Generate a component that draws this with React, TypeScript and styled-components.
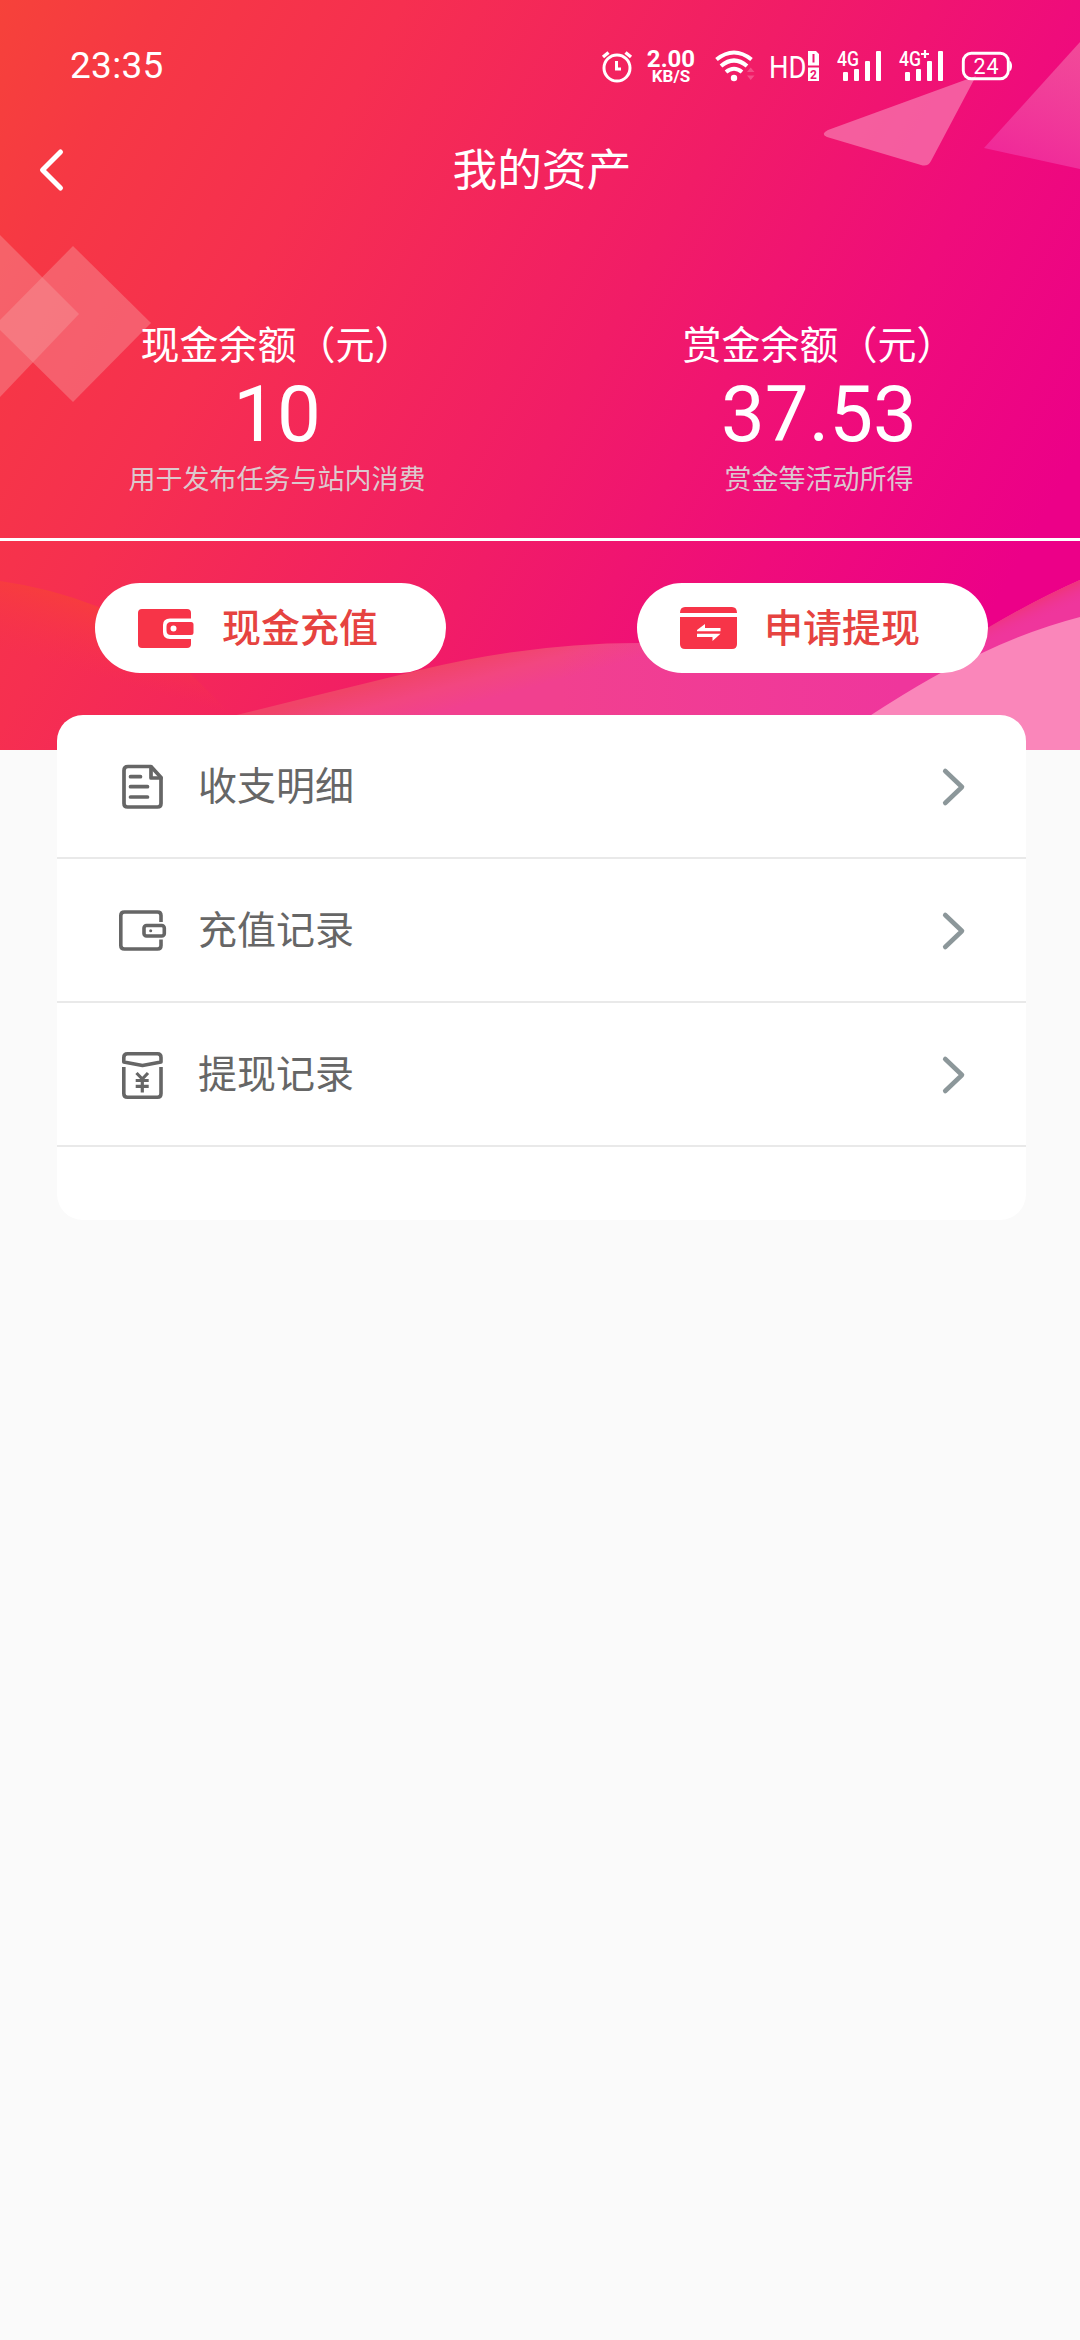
import React from "react";
import styled, { createGlobalStyle } from "styled-components";

const GlobalStyle = createGlobalStyle`
  body {
    margin: 0;
    background: #fafafa;
    font-family: Roboto, "Noto Sans CJK SC", sans-serif;
  }
`;

const Page = styled.div`
  width: 1080px;
  min-height: 2340px;
  background: #fafafa;
  overflow: hidden;
`;

const Hero = styled.header`
  position: relative;
  box-sizing: border-box;
  height: 750px;
  color: #fff;
  background: linear-gradient(
    119deg,
    #f6423a 0%,
    #f63844 11%,
    #f62f50 27%,
    #f11c67 53%,
    #ef0c7b 72%,
    #ec0088 89%
  );
`;

const Scenery = styled.svg`
  position: absolute;
  inset: 0;
`;

const HeroContent = styled.div`
  position: relative;
  display: flex;
  flex-direction: column;
`;

const StatusBar = styled.div`
  display: flex;
  align-items: center;
  justify-content: space-between;
  height: 132px;
  padding: 0 68px 0 70px;
`;

const Clock = styled.span`
  font-size: 37px;
  line-height: 44px;
  letter-spacing: 0.3px;
`;

const StatusIcons = styled.div`
  display: flex;
  align-items: center;
  svg {
    display: block;
  }
`;

const StatusItem = styled.span<{ $gap?: number }>`
  margin-left: ${(p) => p.$gap ?? 0}px;
`;

const NetSpeed = styled.div`
  display: flex;
  flex-direction: column;
  align-items: center;
  width: 54px;
  padding-top: 1px;
  font-weight: 700;
`;

const SpeedValue = styled.span`
  font-size: 24px;
  line-height: 20px;
`;

const SpeedUnit = styled.span`
  font-size: 17px;
  line-height: 15px;
`;

const NavBar = styled.nav`
  display: grid;
  grid-template-columns: 90px 1fr 90px;
  align-items: center;
  height: 76px;
`;

const BackButton = styled.button`
  display: flex;
  border: 0;
  padding: 0 0 0 36px;
  background: none;
  color: #fff;
`;

const Title = styled.h1`
  margin: 0;
  padding: 2px 0 0 4px;
  text-align: center;
  font-size: 44.7px;
  line-height: 66px;
  font-weight: 400;
`;

const Balances = styled.section`
  display: grid;
  grid-template-columns: 540px 540px;
  box-sizing: border-box;
  height: 333px;
  padding-top: 110px;
  border-bottom: 3px solid #fff;
`;

const Balance = styled.div`
  display: flex;
  flex-direction: column;
  align-items: center;
  padding-left: 14px;

  & + & {
    padding-left: 18px;
  }
`;

const BalanceLabel = styled.span`
  font-size: 39px;
  line-height: 56px;
`;

const Amount = styled.span`
  padding-top: 1px;
  font-size: 78px;
  line-height: 80px;
`;

const BalanceNote = styled.span`
  font-size: 27px;
  line-height: 50px;
  color: rgba(218, 218, 218, 0.92);
`;

const Actions = styled.div`
  display: flex;
  justify-content: space-between;
  padding: 42px 92px 0 95px;
`;

const PillButton = styled.button`
  display: flex;
  align-items: center;
  gap: 26px;
  box-sizing: border-box;
  width: 351px;
  height: 90px;
  padding: 0 0 0 41px;
  border: 0;
  border-radius: 45px;
  background: #fff;
  color: #e64340;
  font: 500 39px/56px Roboto, "Noto Sans CJK SC", sans-serif;
`;

const PillText = styled.span`
  padding-top: 1px;
`;

const Card = styled.main`
  position: relative;
  box-sizing: border-box;
  width: 969px;
  margin: -35px 0 0 57px;
  padding-bottom: 73px;
  border-radius: 26px;
  background: #fff;
`;

const Row = styled.div`
  display: flex;
  align-items: center;
  box-sizing: border-box;
  height: 144px;
  padding: 1px 59px 0 61px;
  border-bottom: 2px solid #e9e9e9;
`;

const RowLabel = styled.span`
  flex: 1;
  margin-left: 30px;
  padding-top: 1px;
  font-size: 39px;
  line-height: 56px;
  color: #666;
`;

const HeroScenery = () => (
  <Scenery width="1080" height="750" viewBox="0 0 1080 750">
    <defs>
      <linearGradient id="wave" gradientUnits="userSpaceOnUse" x1="430" y1="668" x2="442" y2="712">
        <stop offset="0" stopColor="#f04468" />
        <stop offset="0.5" stopColor="#f24680" />
        <stop offset="1" stopColor="#f1408f" />
      </linearGradient>
      <linearGradient id="waveRight" gradientUnits="userSpaceOnUse" x1="560" y1="0" x2="900" y2="0">
        <stop offset="0" stopColor="#f0369f" stopOpacity="0" />
        <stop offset="1" stopColor="#ef369c" />
      </linearGradient>
      <linearGradient id="crest" gradientUnits="userSpaceOnUse" x1="1028" y1="600" x2="1038" y2="622">
        <stop offset="0" stopColor="#ef3470" />
        <stop offset="1" stopColor="#ef349c" stopOpacity="0" />
      </linearGradient>
      <linearGradient id="ember" gradientUnits="userSpaceOnUse" x1="40" y1="584" x2="20" y2="655">
        <stop offset="0" stopColor="#f74138" stopOpacity="0.8" />
        <stop offset="1" stopColor="#f73548" stopOpacity="0" />
      </linearGradient>
      <linearGradient id="shard" gradientUnits="userSpaceOnUse" x1="1080" y1="50" x2="1030" y2="170">
        <stop offset="0" stopColor="#f36aa8" stopOpacity="0.65" />
        <stop offset="1" stopColor="#f02fa0" stopOpacity="0.8" />
      </linearGradient>
    </defs>
    <path d="M0 235L79 314L0 397Z" fill="#f6969a" fillOpacity="0.44" />
    <path d="M73 246L151 323L73 402L-5 325Z" fill="#f6969a" fillOpacity="0.44" />
    <path
      d="M828 130L976 76L931 161Q928 167 921 165L827 137Q820 134 828 130Z"
      fill="#f890bd"
      fillOpacity="0.6"
    />
    <path d="M1080 42L984 148L1080 169Z" fill="url(#shard)" />
    <path d="M0 581Q50 588 96 606Q150 628 230 714L230 750H0Z" fill="url(#ember)" />
    <path
      d="M228 717Q330 692 420 670Q530 643 640 643Q800 700 988 628Q1035 600 1080 580V750H228Z"
      fill="url(#wave)"
    />
    <path
      d="M560 650Q600 643 640 643Q800 700 988 628Q1035 600 1080 580V750H560Z"
      fill="url(#waveRight)"
    />
    <path d="M980 632Q1035 600 1080 580V750H980Z" fill="url(#crest)" />
    <path d="M868 717Q940 670 982 653Q1030 630 1080 617V750H868Z" fill="#fa86ba" />
  </Scenery>
);

const AlarmIcon = () => (
  <svg width="32" height="40" viewBox="600 46 32 40" fill="none" stroke="#fff" strokeWidth="3">
    <circle cx="616" cy="68" r="13" />
    <path d="M615.5 61V69H620" />
    <path d="M602 57L607.5 52.5M624.5 52.5L630 57" strokeWidth="3.400" />
  </svg>
);

const WifiIcon = () => (
  <svg width="40" height="40" viewBox="714 46 40 40" fill="none" stroke="#fff" strokeWidth="4.100">
    <path d="M715.500 59.500Q733 45.500 750.500 59.500" />
    <path d="M720 66Q733 55 746 66" />
    <path d="M725 72Q733 65.500 741 72" />
    <circle cx="733" cy="78" r="3.200" fill="#fff" stroke="none" />
    <path d="M746 72L749.700 67.500L753.500 72ZM746 75.500L749.700 80L753.500 75.500Z" fill="#fff" fillOpacity="0.22" stroke="none" />
  </svg>
);

const HdIcon = () => (
  <svg width="52" height="40" viewBox="768 46 52 40" fill="#fff" fontFamily="Roboto">
    <text x="768" y="77.900" fontSize="32" fontWeight="400" textLength="37.500" lengthAdjust="spacingAndGlyphs">HD</text>
    <path d="M807 51H815L818 54V65.500H807ZM807 67.500H818V81H807Z" />
    <path d="M812.500 54V62.500" stroke="#ee1672" strokeWidth="2" />
    <text x="809" y="78.500" fontSize="12" fontWeight="700" style={{ fill: "#ee1672" }}>2</text>
  </svg>
);

const SignalIcon = ({ plus }: { plus?: boolean }) => (
  <svg width="46" height="40" viewBox="835 46 46 40" fill="#fff" fontFamily="Roboto">
    <text x="836" y="66" fontSize="20" fontWeight="500" textLength="22" lengthAdjust="spacingAndGlyphs">4G</text>
    {plus && <path d="M862 50V58M858 54H866" stroke="#fff" strokeWidth="2.200" />}
    <rect x="842" y="72" width="5" height="9" rx="1" />
    <rect x="853" y="69" width="5" height="12" rx="1" />
    <rect x="864" y="61" width="5" height="20" rx="1" />
    <rect x="875" y="51" width="5" height="30" rx="1" />
  </svg>
);

const BatteryIcon = () => (
  <svg width="51" height="40" viewBox="960 46 51 40" fill="#fff" fontFamily="Roboto">
    <rect x="962.300" y="53.300" width="45" height="25.400" rx="8" fill="none" stroke="#fff" strokeWidth="2.900" />
    <path d="M1008.500 60.500Q1011 62 1011 66Q1011 70 1008.500 71.500Z" />
    <text x="972.500" y="73.500" fontSize="21.500" textLength="25">24</text>
  </svg>
);

const BackIcon = () => (
  <svg width="30" height="46" viewBox="36 148 30 46" fill="none" stroke="#fff" strokeWidth="5" strokeLinecap="round" strokeLinejoin="round">
    <path d="M60.500 153L42.500 171L60.500 189" />
  </svg>
);

const WalletSolidIcon = () => (
  <svg width="60" height="48" viewBox="136 604 60 48" fill="#f73448">
    <path d="M142 609H187Q191 609 191 613V618.500H170Q163 618.500 163 625V632Q163 639 170 639H191V644Q191 648 187 648H142Q138 648 138 644V613Q138 609 142 609Z" />
    <path
      fillRule="evenodd"
      d="M171 622H191Q193.500 622 193.500 624.500V632.500Q193.500 635 191 635H171Q166.500 635 166.500 630.500V626.500Q166.500 622 171 622ZM173.500 625.500A3 3 0 1 0 173.500 631.500A3 3 0 1 0 173.500 625.500Z"
    />
  </svg>
);

const TransferCardIcon = () => (
  <svg width="60" height="48" viewBox="677 605 60 48" fill="#f73448">
    <path d="M684 608H731Q736 608 736 614H679Q679 608 684 608Z" />
    <path d="M679 618H736V645Q736 650 731 650H684Q679 650 679 645Z" />
    <path d="M696 631L704 625V629H719.500V632.300H696ZM719.500 634.800L711.500 642V638H696V634.800Z" fill="#fff" />
  </svg>
);

const LedgerIcon = () => (
  <svg width="50" height="50" viewBox="118 762 50 50" fill="none" stroke="#666" strokeWidth="3.700" strokeLinejoin="round" strokeLinecap="round">
    <path d="M128 766.500H151L161 777.500V803.500Q161 807 157.500 807H127.500Q124 807 124 803.500V770.500Q124 766.500 128 766.500Z" />
    <path d="M151 767V778H161M130.500 776.700H140.500M130.500 786.700H147.500M130.500 797H147.500" />
  </svg>
);

const WalletIcon = () => (
  <svg width="50" height="50" viewBox="118 906 50 50" fill="none" stroke="#666" strokeWidth="3.600" strokeLinejoin="round" strokeLinecap="butt">
    <path d="M161 922V915.500Q161 912 157.500 912H124.500Q120.800 912 120.800 915.500V945.500Q120.800 949 124.500 949H157.500Q161 949 161 945.500V939.500" />
    <rect x="144" y="925.500" width="20.300" height="10.500" rx="2.500" />
    <circle cx="150.700" cy="930.700" r="1.500" fill="#666" stroke="none" />
  </svg>
);

const EnvelopeIcon = () => (
  <svg width="50" height="50" viewBox="118 1049 50 50" fill="none" stroke="#666" strokeWidth="3.600" strokeLinejoin="round">
    <path d="M123.800 1061V1056.500Q123.800 1052.800 127.500 1052.800H157.500Q161 1052.800 161 1056.500V1061L142.500 1064.500Z" />
    <path d="M123.800 1066V1092.500Q123.800 1096.300 127.500 1096.300H157.500Q161 1096.300 161 1092.500V1066" />
    <path d="M136.500 1072L142.300 1078L148 1072M142.300 1078V1091.500M135.700 1079.500H148.700M135.700 1085.300H148.700" strokeWidth="3.200" />
  </svg>
);

const ChevronIcon = () => (
  <svg width="26" height="42" viewBox="940 766 26 42" fill="none" stroke="#8c979a" strokeWidth="4.600" strokeLinecap="round" strokeLinejoin="round">
    <path d="M944.200 771L961 787L944.200 803" />
  </svg>
);

const balances = [
  { label: "现金余额（元）", amount: "10", note: "用于发布任务与站内消费" },
  { label: "赏金余额（元）", amount: "37.53", note: "赏金等活动所得" },
];

const records = [
  { label: "收支明细", icon: <LedgerIcon /> },
  { label: "充值记录", icon: <WalletIcon /> },
  { label: "提现记录", icon: <EnvelopeIcon /> },
];

export default function App() {
  return (
    <Page>
      <GlobalStyle />
      <Hero>
        <HeroScenery />
        <HeroContent>
          <StatusBar>
            <Clock>23:35</Clock>
            <StatusIcons>
              <StatusItem><AlarmIcon /></StatusItem>
              <StatusItem $gap={11}>
                <NetSpeed>
                  <SpeedValue>2.00</SpeedValue>
                  <SpeedUnit>KB/S</SpeedUnit>
                </NetSpeed>
              </StatusItem>
              <StatusItem $gap={17}><WifiIcon /></StatusItem>
              <StatusItem $gap={14}><HdIcon /></StatusItem>
              <StatusItem $gap={15}><SignalIcon /></StatusItem>
              <StatusItem $gap={16}><SignalIcon plus /></StatusItem>
              <StatusItem $gap={17}><BatteryIcon /></StatusItem>
            </StatusIcons>
          </StatusBar>
          <NavBar>
            <BackButton aria-label="返回"><BackIcon /></BackButton>
            <Title>我的资产</Title>
          </NavBar>
          <Balances>
            {balances.map((b) => (
              <Balance key={b.label}>
                <BalanceLabel>{b.label}</BalanceLabel>
                <Amount>{b.amount}</Amount>
                <BalanceNote>{b.note}</BalanceNote>
              </Balance>
            ))}
          </Balances>
          <Actions>
            <PillButton><WalletSolidIcon /><PillText>现金充值</PillText></PillButton>
            <PillButton><TransferCardIcon /><PillText>申请提现</PillText></PillButton>
          </Actions>
        </HeroContent>
      </Hero>
      <Card>
        {records.map((r) => (
          <Row key={r.label}>
            {r.icon}
            <RowLabel>{r.label}</RowLabel>
            <ChevronIcon />
          </Row>
        ))}
      </Card>
    </Page>
  );
}
